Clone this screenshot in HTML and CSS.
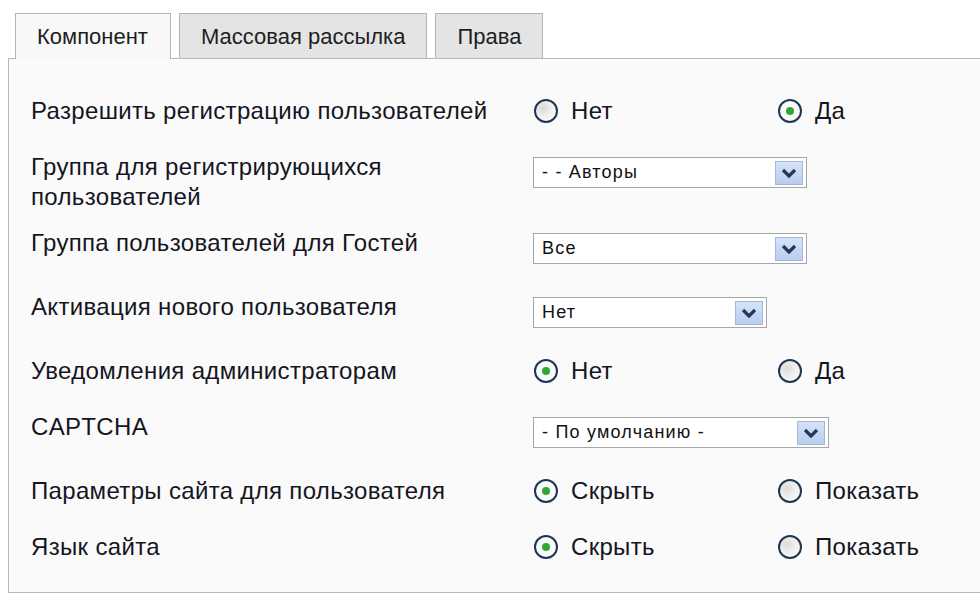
FILE: index.html
```html
<!DOCTYPE html>
<html lang="ru">
<head>
<meta charset="utf-8">
<title>Настройки пользователей</title>
<link rel="stylesheet" href="styles.css">
</head>
<body>
<div class="tabs">
  <div class="tab active">Компонент</div>
  <div class="tab">Массовая рассылка</div>
  <div class="tab">Права</div>
</div>
<div class="panel">
  <div class="row">
    <div class="label">Разрешить регистрацию пользователей</div>
    <div class="radios">
      <label class="opt"><span class="radio"></span>Нет</label>
      <label class="opt"><span class="radio checked"></span>Да</label>
    </div>
  </div>
  <div class="row">
    <div class="label">Группа для регистрирующихся<br>пользователей</div>
    <div class="selwrap"><div class="select w274"><span class="val">- - Авторы</span><span class="btn"><svg viewBox="0 0 16 12" width="16" height="12"><path d="M2 3 L8 9 L14 3" fill="none" stroke="#26365a" stroke-width="3.2"/></svg></span></div></div>
  </div>
  <div class="row">
    <div class="label">Группа пользователей для Гостей</div>
    <div class="selwrap"><div class="select w274"><span class="val">Все</span><span class="btn"><svg viewBox="0 0 16 12" width="16" height="12"><path d="M2 3 L8 9 L14 3" fill="none" stroke="#26365a" stroke-width="3.2"/></svg></span></div></div>
  </div>
  <div class="row">
    <div class="label">Активация нового пользователя</div>
    <div class="selwrap"><div class="select w234"><span class="val">Нет</span><span class="btn"><svg viewBox="0 0 16 12" width="16" height="12"><path d="M2 3 L8 9 L14 3" fill="none" stroke="#26365a" stroke-width="3.2"/></svg></span></div></div>
  </div>
  <div class="row">
    <div class="label">Уведомления администраторам</div>
    <div class="radios">
      <label class="opt"><span class="radio checked"></span>Нет</label>
      <label class="opt"><span class="radio"></span>Да</label>
    </div>
  </div>
  <div class="row">
    <div class="label">CAPTCHA</div>
    <div class="selwrap"><div class="select w296"><span class="val">- По умолчанию -</span><span class="btn"><svg viewBox="0 0 16 12" width="16" height="12"><path d="M2 3 L8 9 L14 3" fill="none" stroke="#26365a" stroke-width="3.2"/></svg></span></div></div>
  </div>
  <div class="row">
    <div class="label">Параметры сайта для пользователя</div>
    <div class="radios">
      <label class="opt"><span class="radio checked"></span>Скрыть</label>
      <label class="opt"><span class="radio"></span>Показать</label>
    </div>
  </div>
  <div class="row">
    <div class="label">Язык сайта</div>
    <div class="radios">
      <label class="opt"><span class="radio checked"></span>Скрыть</label>
      <label class="opt"><span class="radio"></span>Показать</label>
    </div>
  </div>
</div>
</body>
</html>
```
FILE: styles.css
```css
html, body {
  margin: 0;
  padding: 0;
  background: #ffffff;
}
body {
  font-family: "Liberation Sans", Arial, sans-serif;
  color: #15151f;
  width: 980px;
  height: 604px;
  overflow: hidden;
}
.tabs {
  display: flex;
  gap: 8px;
  padding: 13px 0 0 15px;
  position: relative;
  z-index: 1;
}
.tab {
  height: 45px;
  box-sizing: border-box;
  border: 1px solid #b4b4b4;
  border-bottom: none;
  background: #e4e4e4;
  font-size: 22px;
  line-height: 46px;
  padding: 0 21px;
  color: #1e1e1e;
}
.tab.active {
  background: #f8f8f8;
  height: 46px;
  margin-bottom: -1px;
  padding: 0 22px 0 21px;
}
.tab.last {
  letter-spacing: -0.3px;
}
.panel {
  margin-left: 8px;
  margin-right: -10px;
  border: 1px solid #b8b8b8;
  background: #fafafa;
  height: 535px;
  box-sizing: border-box;
  padding: 37px 0 0 22px;
  display: flex;
  flex-direction: column;
  gap: 16px;
}
.row {
  display: flex;
  align-items: flex-start;
}
.label {
  width: 502px;
  flex: none;
  font-size: 24px;
  letter-spacing: 0.33px;
  line-height: 30px;
}
.radios {
  display: flex;
  height: 40px;
}
.opt {
  width: 244px;
  display: flex;
  align-items: center;
  height: 30px;
  font-size: 24px;
  letter-spacing: 0.3px;
}
.radio {
  width: 20px;
  height: 20px;
  border: 2px solid #1d3652;
  border-radius: 50%;
  background: radial-gradient(circle at 35% 35%, #dedad6 0%, #efefef 45%, #ffffff 100%);
  margin: 0 13px 0 1px;
  display: flex;
  align-items: center;
  justify-content: center;
  flex: none;
}
.radio.checked {
  background: radial-gradient(circle at 50% 50%, #ffffff 0%, #f4f4f4 100%);
}
.radio.checked::after {
  content: "";
  width: 8px;
  height: 8px;
  border-radius: 50%;
  background: #2fa832;
}
.selwrap {
  padding: 5px 0 12px 0;
}
.select {
  height: 31px;
  box-sizing: border-box;
  border: 1px solid #a6a6a6;
  background: #ffffff;
  display: flex;
  align-items: center;
  justify-content: space-between;
  padding: 0 3px 0 8px;
  font-size: 18px;
  letter-spacing: 1.2px;
  color: #111;
}
.w274 { width: 274px; }
.w234 { width: 234px; }
.w296 { width: 296px; }
.btn {
  width: 28px;
  height: 24px;
  box-sizing: border-box;
  border: 1px solid #a2b8dc;
  background: linear-gradient(#d6e3f7, #b8cdf0);
  display: flex;
  align-items: center;
  justify-content: center;
}
```
